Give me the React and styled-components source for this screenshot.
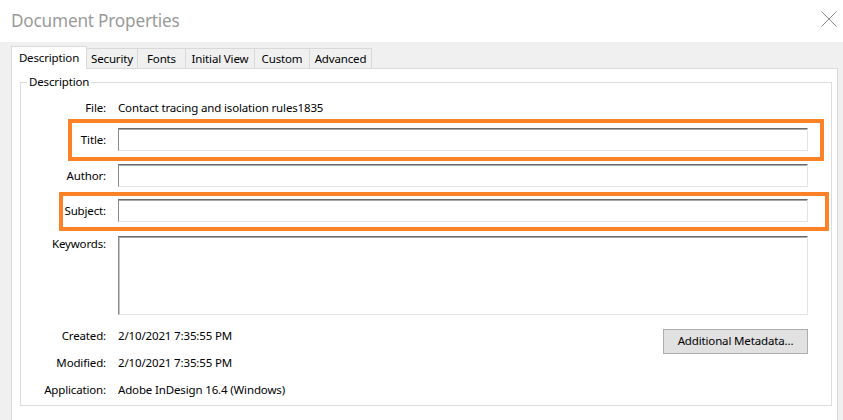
import React from 'react';
import styled, { createGlobalStyle } from 'styled-components';

const GlobalStyle = createGlobalStyle`
  html, body {
    margin: 0;
    padding: 0;
    background: #f0f0f0;
  }
  body {
    font-family: 'Noto Sans', 'Open Sans', sans-serif;
    font-size: 11.5px;
    letter-spacing: -0.15px;
    color: #000;
  }
`;

const tabs = [
  { name: 'Description', width: 76 },
  { name: 'Security', width: 52 },
  { name: 'Fonts', width: 49 },
  { name: 'Initial View', width: 70 },
  { name: 'Custom', width: 56 },
  { name: 'Advanced', width: 63 },
];

const CloseIcon = () => (
  <svg width="16" height="16" viewBox="0 0 16 16">
    <path d="M0.5 0.5 L15.5 15.5 M15.5 0.5 L0.5 15.5" stroke="#8c8c8c" strokeWidth="1" fill="none" />
  </svg>
);

export default function App() {
  return (
    <>
      <GlobalStyle />
      <Dialog>
        <TitleBar>
          <Heading>Document Properties</Heading>
          <CloseButton aria-label="Close">
            <CloseIcon />
          </CloseButton>
        </TitleBar>

        <Body>
          <TabStrip>
            {tabs.map((t, i) => (
              <Tab key={t.name} $active={i === 0} $width={t.width}>
                {t.name}
              </Tab>
            ))}
          </TabStrip>

          <Panel>
            <Group>
              <Legend>Description</Legend>

              <Row $top={10}>
                <Label>File:</Label>
                <Value>Contact tracing and isolation rules1835</Value>
              </Row>

              <Row $top={12} $center>
                <Label>Title:</Label>
                <Field readOnly />
                <Highlight $t={-9} $b={-10} $l={47} $r={-16} />
              </Row>

              <Row $top={13} $center>
                <Label>Author:</Label>
                <Field readOnly />
              </Row>

              <Row $top={12} $center>
                <Label>Subject:</Label>
                <Field readOnly />
                <Highlight $t={-7} $b={-9} $l={38} $r={-21} />
              </Row>

              <Row $top={14}>
                <Label>Keywords:</Label>
                <Area readOnly />
              </Row>

              <Row $top={13}>
                <Label>Created:</Label>
                <ValueWithAction>
                  <Value>2/10/2021 7:35:55 PM</Value>
                  <Button>Additional Metadata...</Button>
                </ValueWithAction>
              </Row>

              <Row $top={1}>
                <Label>Modified:</Label>
                <Value>2/10/2021 7:35:55 PM</Value>
              </Row>

              <Row $top={11}>
                <Label>Application:</Label>
                <Value>Adobe InDesign 16.4 (Windows)</Value>
              </Row>
            </Group>
          </Panel>
        </Body>
      </Dialog>
    </>
  );
}

const Dialog = styled.div`
  width: 843px;
  height: 420px;
  display: flex;
  flex-direction: column;
  overflow: hidden;
`;

const TitleBar = styled.div`
  height: 42px;
  background: #ffffff;
  display: flex;
  align-items: center;
  justify-content: space-between;
  padding: 0 6px 0 11px;
  box-sizing: border-box;
`;

const Heading = styled.h1`
  margin: 0 0 2px;
  font-size: 17.2px;
  font-weight: 400;
  color: #9a9a9a;
  letter-spacing: -0.2px;
`;

const CloseButton = styled.button`
  border: none;
  background: none;
  padding: 0;
  width: 16px;
  height: 16px;
  margin: 0 0 4px;
  display: flex;
`;

const Body = styled.div`
  flex: 1;
  background: #f0f0f0;
  padding: 4px 5px 0 11px;
  display: flex;
  flex-direction: column;
`;

const TabStrip = styled.div`
  display: flex;
  align-items: flex-end;
  height: 22px;
  position: relative;
  z-index: 1;
`;

const Tab = styled.div`
  box-sizing: border-box;
  width: ${(p) => p.$width}px;
  height: ${(p) => (p.$active ? 23 : 20)}px;
  margin-bottom: ${(p) => (p.$active ? -1 : 0)}px;
  margin-left: -1px;
  &:first-child {
    margin-left: 0;
  }
  background: ${(p) => (p.$active ? '#ffffff' : '#f0f0f0')};
  border: 1px solid #d9d9d9;
  border-bottom: none;
  display: flex;
  align-items: center;
  justify-content: center;
  padding-bottom: ${(p) => (p.$active ? 2 : 0)}px;
  white-space: nowrap;
`;

const Panel = styled.div`
  flex: 1;
  background: #ffffff;
  border: 1px solid #d9d9d9;
  border-bottom: none;
  padding: 5px 5px 0 8px;
`;

const Group = styled.fieldset`
  margin: 0;
  border: 1px solid #dcdcdc;
  padding: 0 23px 7px 0;
  min-width: 0;
`;

const Legend = styled.legend`
  margin-left: 6px;
  padding: 0 2px;
  line-height: 16px;
`;

const Row = styled.div`
  position: relative;
  display: grid;
  grid-template-columns: 85px 1fr;
  column-gap: 12px;
  align-items: ${(p) => (p.$center ? 'center' : 'start')};
  margin-top: ${(p) => p.$top}px;
  line-height: 16px;
`;

const Label = styled.div`
  text-align: right;
  white-space: nowrap;
`;

const Value = styled.div`
  white-space: nowrap;
`;

const ValueWithAction = styled.div`
  display: flex;
  justify-content: space-between;
  align-items: flex-start;
`;

const Field = styled.input`
  box-sizing: border-box;
  height: 23px;
  width: 100%;
  margin: 0;
  padding: 0 3px;
  background: #fff;
  border-style: solid;
  border-width: 1px;
  border-color: #6a6a6a #e3e3e3 #e3e3e3 #8a8a8a;
  box-shadow: inset 0 1px 0 #a9a9a9;
  font: inherit;
  outline: none;
`;

const Area = styled.textarea`
  box-sizing: border-box;
  height: 79px;
  width: 100%;
  margin: 0;
  padding: 2px 3px;
  background: #fff;
  border-style: solid;
  border-width: 1px;
  border-color: #6a6a6a #e3e3e3 #e3e3e3 #8a8a8a;
  box-shadow: inset 0 1px 0 #a9a9a9, inset 1px 0 0 #c4c4c4;
  font: inherit;
  resize: none;
  outline: none;
  display: block;
`;

const Button = styled.button`
  box-sizing: border-box;
  width: 145px;
  height: 25px;
  margin-top: 1px;
  background: #e1e1e1;
  border: 1px solid #adadad;
  font: inherit;
  letter-spacing: inherit;
  color: #000;
  padding: 0 0 1px;
`;

const Highlight = styled.div`
  position: absolute;
  top: ${(p) => p.$t}px;
  bottom: ${(p) => p.$b}px;
  left: ${(p) => p.$l}px;
  right: ${(p) => p.$r}px;
  border: 4px solid #fd8127;
  pointer-events: none;
`;
